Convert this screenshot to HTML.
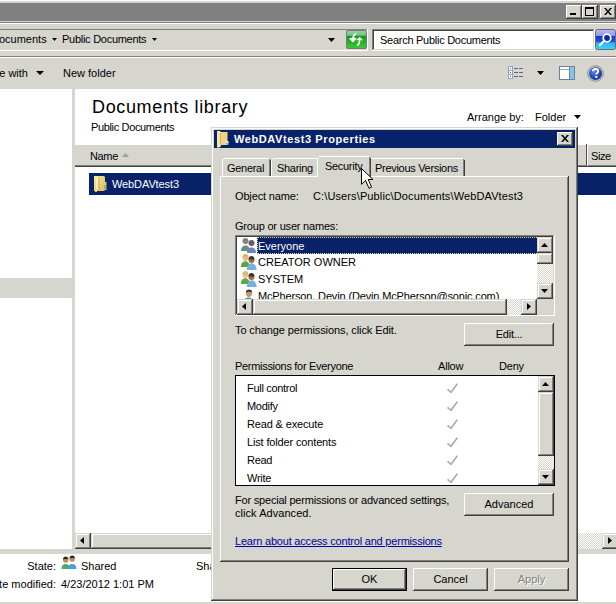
<!DOCTYPE html>
<html><head><meta charset="utf-8">
<style>
*{margin:0;padding:0;box-sizing:border-box}
html,body{width:616px;height:604px;overflow:hidden;background:#fff}
body{position:relative;font-family:"Liberation Sans",sans-serif;font-size:11px;color:#000}
.a{position:absolute}
.f{position:absolute;background:#d6d5ce}
.t{position:absolute;font:11px/13px "Liberation Sans",sans-serif;white-space:pre;color:#000}
.raised{box-shadow:inset -1px -1px #404040,inset 1px 1px #fff,inset -2px -2px #808080,inset 2px 2px #d6d5ce;background:#d6d5ce}
.sunken{box-shadow:inset -1px -1px #fff,inset 1px 1px #808080,inset -2px -2px #d6d5ce,inset 2px 2px #404040}
.dith{background-color:#fff;background-image:repeating-conic-gradient(#d6d5ce 0 25%,#fff 0 50%);background-size:2px 2px}
.sb{position:absolute;box-shadow:inset -1px -1px #404040,inset 1px 1px #d6d5ce,inset -2px -2px #808080,inset 2px 2px #fff;background:#d6d5ce}
.btn{position:absolute;box-shadow:inset -1px -1px #404040,inset 1px 1px #fff,inset -2px -2px #808080,inset 2px 2px #d6d5ce;background:#d6d5ce;font:11px/13px "Liberation Sans",sans-serif;text-align:center;white-space:pre}
</style></head><body>
<!-- ============ EXPLORER ============ -->
<div class="f" style="left:0;top:0;width:616px;height:89px"></div>
<div class="a" style="left:0;top:0;width:616px;height:1px;background:#fff"></div>
<div class="a" style="left:0;top:3px;width:616px;height:18px;background:#808080"></div>
<!-- caption buttons -->
<div class="btn" style="left:566px;top:5px;width:16px;height:14px"><div class="a" style="left:4px;top:8px;width:6px;height:2px;background:#000"></div></div>
<div class="btn" style="left:582px;top:5px;width:16px;height:14px"><div class="a" style="left:3px;top:2px;width:9px;height:9px;border:1px solid #000;border-top-width:2px"></div></div>
<div class="btn" style="left:600px;top:5px;width:16px;height:14px"><svg class="a" style="left:4px;top:3px" width="8" height="7" viewBox="0 0 8 7"><path d="M0 0h2l2 2.5L6 0h2L5 3.5 8 7H6L4 4.5 2 7H0l3-3.5z" fill="#000"/></svg></div>
<!-- separators -->
<div class="a" style="left:0;top:22px;width:616px;height:1px;background:#808080"></div>
<div class="a" style="left:0;top:23px;width:616px;height:1px;background:#fff"></div>
<!-- address bar -->
<div class="a" style="left:0;top:29px;width:367px;height:1px;background:#808080"></div>
<div class="a" style="left:367px;top:29px;width:1px;height:22px;background:#fff"></div>
<div class="a" style="left:0;top:50px;width:368px;height:1px;background:#fff"></div>
<div class="t" style="left:-9px;top:33px">Documents</div>
<svg class="a" style="left:52px;top:38px" width="5" height="3"><path d="M0 0h5L2.5 3z" fill="#000"/></svg>
<div class="t" style="left:62px;top:33px;letter-spacing:-0.27px">Public Documents</div>
<svg class="a" style="left:152px;top:38px" width="5" height="3"><path d="M0 0h5L2.5 3z" fill="#000"/></svg>
<svg class="a" style="left:328px;top:38px" width="7" height="4"><path d="M0 0h7L3.5 4z" fill="#000"/></svg>
<!-- refresh button -->
<svg class="a" style="left:346px;top:30px" width="21" height="19" viewBox="0 0 21 19">
<defs><linearGradient id="gg" x1="0" y1="0" x2="0" y2="1"><stop offset="0" stop-color="#9ad3a6"/><stop offset="0.27" stop-color="#6cc488"/><stop offset="0.31" stop-color="#0d9e0d"/><stop offset="1" stop-color="#3cc83c"/></linearGradient></defs>
<rect x="0.5" y="0.5" width="20" height="18" rx="1.5" fill="url(#gg)" stroke="#7a7a7a"/>
<path d="M10.3 3.8C8.2 4 7.3 5.5 7.3 8" stroke="#fff" stroke-width="1.7" fill="none"/>
<path d="M2.9 8.5L6.3 7.5H8.1L10.9 8.5L6.9 12.4Z" fill="#fff"/>
<path d="M13.6 10C13.6 13 12.8 14.6 11.2 15.5" stroke="#fff" stroke-width="1.7" fill="none"/>
<path d="M13.6 6.7L17.3 10.6L14.6 10.1H12.7L9.9 10.6Z" fill="#fff"/>
</svg>
<!-- search box -->
<div class="a sunken" style="left:372px;top:29px;width:223px;height:22px;background:#fff"></div>
<div class="t" style="left:380px;top:34px;letter-spacing:-0.27px">Search Public Documents</div>
<svg class="a" style="left:595px;top:29px" width="21" height="21" viewBox="0 0 21 21">
<defs><linearGradient id="bg" x1="0" y1="0" x2="0" y2="1"><stop offset="0" stop-color="#b8bdf5"/><stop offset="0.3" stop-color="#8f98ea"/><stop offset="0.34" stop-color="#1236c8"/><stop offset="0.62" stop-color="#1a56d8"/><stop offset="0.66" stop-color="#2fb4ee"/><stop offset="1" stop-color="#3cd4f6"/></linearGradient></defs>
<rect x="0.5" y="0.5" width="20" height="20" rx="2" fill="url(#bg)" stroke="#6c6c6c"/>
<circle cx="12" cy="9" r="3.8" fill="#0a2aa8" stroke="#fff" stroke-width="1.8"/>
<path d="M9.3 11.7L5 16" stroke="#fff" stroke-width="2.2" stroke-linecap="round"/>
</svg>
<!-- toolbar -->
<div class="a" style="left:0;top:56px;width:616px;height:1px;background:#808080"></div>
<div class="a" style="left:0;top:57px;width:616px;height:1px;background:#fff"></div>
<div class="t" style="left:-24px;top:67px">Share with</div>
<svg class="a" style="left:36px;top:71px" width="8" height="4"><path d="M0 0h8L4 4z" fill="#000"/></svg>
<div class="t" style="left:63px;top:67px">New folder</div>
<!-- views icon -->
<svg class="a" style="left:507px;top:65px" width="18" height="15" viewBox="0 0 18 15">
<rect x="1.5" y="1.5" width="4" height="4" fill="#fff" stroke="#8ea2c8"/><rect x="3" y="3" width="1" height="1" fill="#3a9a3a"/>
<rect x="1.5" y="5.5" width="4" height="4" fill="#fff" stroke="#8ea2c8"/><rect x="3" y="7" width="1" height="1" fill="#e02020"/>
<rect x="1.5" y="9.5" width="4" height="4" fill="#fff" stroke="#8ea2c8"/><rect x="3" y="11" width="1" height="1" fill="#2a7ae0"/>
<path d="M7 3.5h4M12 3.5h4M7 7.5h4M12 7.5h4M7 11.5h4M12 11.5h4" stroke="#5a6a84" stroke-width="1"/>
</svg>
<svg class="a" style="left:537px;top:71px" width="7" height="4"><path d="M0 0h7L3.5 4z" fill="#000"/></svg>
<!-- preview pane icon -->
<svg class="a" style="left:559px;top:66px" width="16" height="14" viewBox="0 0 16 14">
<rect x="0.5" y="0.5" width="15" height="13" fill="#fff" stroke="#6c7f9c"/>
<path d="M1 3.5h9" stroke="#9aaccc"/>
<rect x="10" y="1" width="5" height="12" fill="#6fd0ea"/>
<path d="M10.5 1v12" stroke="#6c7f9c"/>
<rect x="11.5" y="2" width="2.5" height="10" fill="#a8b8d0" opacity="0.6"/>
</svg>
<!-- help icon -->
<svg class="a" style="left:587px;top:65px" width="17" height="17" viewBox="0 0 17 17">
<defs><radialGradient id="hg" cx="0.4" cy="0.35" r="0.7"><stop offset="0" stop-color="#5a8ae8"/><stop offset="1" stop-color="#0a2a9a"/></radialGradient></defs>
<circle cx="8.5" cy="8.5" r="7.8" fill="#cfcfcf" stroke="#777" stroke-width="0.8"/>
<circle cx="8.5" cy="8.5" r="6.5" fill="url(#hg)"/>
<path d="M6 6.3c0-1.5 1.1-2.3 2.6-2.3 1.6 0 2.6 0.9 2.6 2.2 0 1.6-1.9 1.8-1.9 3.3" stroke="#fff" stroke-width="1.9" fill="none"/>
<rect x="8.3" y="11" width="2" height="2" fill="#fff"/>
</svg>
<!-- nav pane & content -->
<div class="f" style="left:72px;top:89px;width:3px;height:460px"></div>
<div class="f" style="left:0;top:278px;width:72px;height:20px"></div>
<div class="t" style="left:92px;top:96px;font-size:18px;line-height:22px;letter-spacing:0.65px">Documents library</div>
<div class="t" style="left:91px;top:121px;letter-spacing:-0.35px">Public Documents</div>
<div class="t" style="left:467px;top:111px">Arrange by:</div>
<div class="t" style="left:535px;top:111px">Folder</div>
<svg class="a" style="left:574px;top:115px" width="7" height="4"><path d="M0 0h7L3.5 4z" fill="#000"/></svg>
<!-- column header -->
<div class="f" style="left:75px;top:145px;width:541px;height:21px"></div>
<div class="a" style="left:75px;top:165px;width:541px;height:1px;background:#808080"></div><div class="a" style="left:75px;top:166px;width:541px;height:1px;background:#404040"></div>
<div class="a" style="left:586px;top:144px;width:1px;height:22px;background:#505050"></div>
<div class="a" style="left:587px;top:145px;width:1px;height:21px;background:#fff"></div>
<div class="t" style="left:90px;top:150px;letter-spacing:-0.35px">Name</div>
<svg class="a" style="left:122px;top:153px" width="7" height="4"><path d="M0 4h7L3.5 0z" fill="#a0a0a0"/></svg>
<div class="t" style="left:591px;top:150px;letter-spacing:-0.4px">Size</div>
<!-- selected row -->
<div class="a" style="left:89px;top:173px;width:527px;height:22px;background:#08226a"></div>
<svg class="a" style="left:93px;top:175px" width="15" height="17" viewBox="0 0 15 17">
<defs><linearGradient id="fy" x1="0" y1="0" x2="1" y2="1"><stop offset="0" stop-color="#f6e9a8"/><stop offset="1" stop-color="#d8b84c"/></linearGradient></defs>
<path d="M1 1h10l1 1v5h1.5v8H12l-1 1H4v1H2v-1H1z" fill="url(#fy)"/>
<path d="M4 2v13" stroke="#fff8d8" stroke-width="1.2"/>
<path d="M6 2v13" stroke="#c8a850" stroke-width="0.8"/>
<rect x="11.5" y="10" width="1" height="4" fill="#3aa0e0"/>
</svg>
<div class="t" style="left:112px;top:178px;color:#fff;letter-spacing:-0.1px">WebDAVtest3</div>
<!-- horizontal scrollbar -->
<div class="a dith" style="left:75px;top:533px;width:541px;height:16px"></div>
<div class="sb" style="left:75px;top:533px;width:16px;height:16px"><svg class="a" style="left:5px;top:4px" width="4" height="7"><path d="M4 0v7L0 3.5z" fill="#000"/></svg></div>
<div class="sb" style="left:91px;top:533px;width:400px;height:16px"></div>
<div class="sb" style="left:602px;top:533px;width:16px;height:16px"><svg class="a" style="left:6px;top:4px" width="4" height="7"><path d="M0 0v7L4 3.5z" fill="#000"/></svg></div>
<div class="f" style="left:0;top:549px;width:616px;height:5px"></div>
<!-- details pane -->
<div class="t" style="right:560px;top:560px">State:</div>
<svg class="a" style="left:61px;top:555px" width="16" height="14" viewBox="0 0 16 14">
<path d="M0.5 14c0-3.2 1.6-5 4.2-5s4.2 1.8 4.2 5z" fill="#4caa6a"/>
<circle cx="4.7" cy="5" r="2.7" fill="#c08a5a"/><path d="M2 4.6C2 2.6 3.2 1.6 4.7 1.6S7.4 2.6 7.4 4.6c-0.8-0.8-4.6-0.8-5.4 0z" fill="#2a2a2a"/>
<path d="M7 14c0-3.2 1.6-5 4.2-5s4.2 1.8 4.2 5z" fill="#4aa0d0"/>
<circle cx="11.2" cy="4" r="2.7" fill="#c08a5a"/><path d="M8.5 3.6C8.5 1.6 9.7 0.6 11.2 0.6s2.7 1 2.7 3c-0.8-0.8-4.6-0.8-5.4 0z" fill="#2a2a2a"/>
</svg>
<div class="t" style="left:81px;top:560px">Shared</div>
<div class="t" style="left:196px;top:560px">Shared by:</div>
<div class="t" style="right:560px;top:578px">Date modified:</div>
<div class="t" style="left:61px;top:578px">4/23/2012 1:01 PM</div>
<div class="f" style="left:0;top:602px;width:616px;height:2px"></div>
<!-- ============ DIALOG ============ -->
<div class="a" style="left:211px;top:127px;width:367px;height:474px;background:#d6d5ce;box-shadow:inset -1px -1px #404040,inset 1px 1px #d6d5ce,inset -2px -2px #808080,inset 2px 2px #fff"></div>
<div class="a" style="left:214px;top:130px;width:361px;height:18px;background:#08226a"></div>
<svg class="a" style="left:216px;top:130px" width="14" height="18" viewBox="0 0 14 18">
<path d="M3 2h8.5v13H3z" fill="#ead77e"/>
<path d="M1 1h3l1 1v14l-1.5 1.5H1z" fill="#f4e6a0"/>
<path d="M4.5 3v12" stroke="#d8a880" stroke-width="1"/>
<rect x="10.5" y="11" width="2" height="3.5" fill="#e8f0ff"/><rect x="10.5" y="13" width="1.5" height="1.5" fill="#5a9ae0"/>
</svg>
<div class="t" style="left:234px;top:133px;font-weight:bold;color:#fff;letter-spacing:0.6px">WebDAVtest3 Properties</div>
<div class="btn" style="left:557px;top:132px;width:16px;height:14px"><svg class="a" style="left:4px;top:3px" width="8" height="7" viewBox="0 0 8 7"><path d="M0 0h2l2 2.5L6 0h2L5 3.5 8 7H6L4 4.5 2 7H0l3-3.5z" fill="#000"/></svg></div>
<!-- tab panel -->
<div class="a" style="left:220px;top:176px;width:349px;height:386px;box-shadow:inset -1px -1px #404040,inset 1px 1px #fff,inset -2px -2px #808080"></div>
<!-- tabs -->
<div class="a" style="left:222px;top:160px;width:1px;height:16px;background:#fff"></div><div class="a" style="left:223px;top:159px;width:1px;height:1px;background:#fff"></div><div class="a" style="left:224px;top:158px;width:45px;height:1px;background:#fff"></div><div class="a" style="left:269px;top:159px;width:1px;height:17px;background:#808080"></div><div class="a" style="left:270px;top:160px;width:1px;height:16px;background:#404040"></div>
<div class="t" style="left:227px;top:162px;letter-spacing:-0.3px">General</div>
<div class="a" style="left:271px;top:160px;width:1px;height:16px;background:#fff"></div><div class="a" style="left:272px;top:159px;width:1px;height:1px;background:#fff"></div><div class="a" style="left:273px;top:158px;width:44px;height:1px;background:#fff"></div><div class="a" style="left:317px;top:159px;width:1px;height:17px;background:#808080"></div><div class="a" style="left:318px;top:160px;width:1px;height:16px;background:#404040"></div>
<div class="t" style="left:277px;top:162px;letter-spacing:-0.3px">Sharing</div>
<div class="a" style="left:369px;top:160px;width:1px;height:16px;background:#fff"></div><div class="a" style="left:370px;top:159px;width:1px;height:1px;background:#fff"></div><div class="a" style="left:371px;top:158px;width:92px;height:1px;background:#fff"></div><div class="a" style="left:463px;top:159px;width:1px;height:17px;background:#808080"></div><div class="a" style="left:464px;top:160px;width:1px;height:16px;background:#404040"></div>
<div class="t" style="left:375px;top:162px;letter-spacing:-0.3px">Previous Versions</div>
<div class="a" style="left:317px;top:156px;width:54px;height:21px;background:#d6d5ce"></div><div class="a" style="left:317px;top:158px;width:1px;height:19px;background:#fff"></div><div class="a" style="left:318px;top:157px;width:1px;height:1px;background:#fff"></div><div class="a" style="left:319px;top:156px;width:50px;height:1px;background:#fff"></div><div class="a" style="left:369px;top:157px;width:1px;height:20px;background:#808080"></div><div class="a" style="left:370px;top:158px;width:1px;height:19px;background:#404040"></div>
<div class="t" style="left:325px;top:160px;letter-spacing:-0.3px">Security</div>
<!-- object name -->
<div class="t" style="left:235px;top:190px;letter-spacing:-0.15px">Object name:</div>
<div class="t" style="left:313px;top:190px;letter-spacing:0.12px">C:\Users\Public\Documents\WebDAVtest3</div>
<div class="t" style="left:235px;top:220px;letter-spacing:-0.2px">Group or user names:</div>
<!-- listbox 1 -->
<div class="a sunken" style="left:235px;top:235px;width:320px;height:81px;background:#fff;overflow:hidden">
</div>
<div class="a" style="left:237px;top:237px;width:300px;height:62px;overflow:hidden">
  <div class="a" style="left:20px;top:0;width:290px;height:17px;background:#08226a;outline:1px dotted #e8d48c;outline-offset:-1px"></div>
  <div class="t" style="left:21px;top:3px;color:#fff">Everyone</div>
  <div class="t" style="left:21px;top:19px">CREATOR OWNER</div>
  <div class="t" style="left:21px;top:36px">SYSTEM</div>
  <div class="t" style="left:21px;top:53px;letter-spacing:-0.15px">McPherson, Devin (Devin.McPherson@sonic.com)</div>
  <svg class="a" style="left:3px;top:0" width="17" height="16" viewBox="0 0 17 16" opacity="0.75">
    <circle cx="5.5" cy="4" r="3" fill="#5a5a5a"/><path d="M1 14c0-3.5 2-5.5 4.5-5.5S10 10.5 10 14z" fill="#2f6a50"/>
    <circle cx="11.5" cy="6" r="3" fill="#2a2a3a"/><path d="M7 16c0-3.5 2-5.5 4.5-5.5S16 12.5 16 16z" fill="#3a5ab0"/>
  </svg>
  <svg class="a" style="left:3px;top:17px" width="17" height="16" viewBox="0 0 17 16">
    <circle cx="5.5" cy="4" r="3" fill="#e8c090"/><path d="M2.5 3.5c0-2.5 1.5-3.5 3-3.5s3 1 3 3.5z" fill="#d8b860"/><path d="M0.8 13c0-3.5 1.9-5.8 4.5-5.8S9.8 9.5 9.8 13z" fill="#5aa848"/>
    <circle cx="11.5" cy="6" r="3" fill="#a86a40"/><path d="M8.5 5.5c0-2.5 1.5-3.5 3-3.5s3 1 3 3.5z" fill="#333"/><path d="M6.8 16c0-4 2.2-6.8 4.9-6.8s4.9 2.8 4.9 6.8z" fill="#7ab0e0"/>
  </svg>
  <svg class="a" style="left:3px;top:34px" width="17" height="16" viewBox="0 0 17 16">
    <circle cx="5.5" cy="4" r="3" fill="#e8c090"/><path d="M2.5 3.5c0-2.5 1.5-3.5 3-3.5s3 1 3 3.5z" fill="#d8b860"/><path d="M0.8 13c0-3.5 1.9-5.8 4.5-5.8S9.8 9.5 9.8 13z" fill="#5aa848"/>
    <circle cx="11.5" cy="6" r="3" fill="#a86a40"/><path d="M8.5 5.5c0-2.5 1.5-3.5 3-3.5s3 1 3 3.5z" fill="#333"/><path d="M6.8 16c0-4 2.2-6.8 4.9-6.8s4.9 2.8 4.9 6.8z" fill="#7ab0e0"/>
  </svg>
  <svg class="a" style="left:3px;top:51px" width="17" height="16" viewBox="0 0 17 16">
    <path d="M3.5 15c0-3.5 2.3-5.5 5-5.5s5 2 5 5.5z" fill="#3aa070"/>
    <ellipse cx="9" cy="5.6" rx="3" ry="3.4" fill="#c8966a"/><path d="M5.8 5C5.8 2.4 7.2 1.4 9 1.4s3.3 1 3.3 3.4C11.5 4 10 3.8 9 3.8S6.6 4.2 5.8 5z" fill="#333"/>
  </svg>
</div>
<!-- listbox1 v scrollbar -->
<div class="a dith" style="left:537px;top:237px;width:16px;height:62px"></div>
<div class="sb" style="left:537px;top:237px;width:16px;height:16px"><svg class="a" style="left:4px;top:6px" width="7" height="4"><path d="M0 4h7L3.5 0z" fill="#000"/></svg></div>
<div class="sb" style="left:537px;top:253px;width:16px;height:11px"></div>
<div class="sb" style="left:537px;top:283px;width:16px;height:16px"><svg class="a" style="left:4px;top:6px" width="7" height="4"><path d="M0 0h7L3.5 4z" fill="#000"/></svg></div>
<!-- listbox1 h scrollbar -->
<div class="a dith" style="left:237px;top:299px;width:300px;height:16px"></div>
<div class="sb" style="left:237px;top:299px;width:16px;height:16px"><svg class="a" style="left:5px;top:4px" width="4" height="7"><path d="M4 0v7L0 3.5z" fill="#000"/></svg></div>
<div class="sb" style="left:253px;top:299px;width:254px;height:16px"></div>
<div class="sb" style="left:521px;top:299px;width:16px;height:16px"><svg class="a" style="left:6px;top:4px" width="4" height="7"><path d="M0 0v7L4 3.5z" fill="#000"/></svg></div>
<div class="f" style="left:537px;top:299px;width:16px;height:16px"></div>
<div class="t" style="left:235px;top:324px;letter-spacing:-0.1px">To change permissions, click Edit.</div>
<div class="btn" style="left:464px;top:323px;width:90px;height:23px;padding-top:5px;letter-spacing:-0.2px">Edit...</div>
<div class="t" style="left:235px;top:360px;letter-spacing:-0.3px">Permissions for Everyone</div>
<div class="t" style="left:438px;top:360px;letter-spacing:-0.2px">Allow</div>
<div class="t" style="left:499px;top:360px;letter-spacing:-0.2px">Deny</div>
<!-- listbox 2 -->
<div class="a" style="left:235px;top:375px;width:320px;height:111px;background:#fff;border:1px solid #000"></div>
<div class="t" style="left:247px;top:382px;letter-spacing:-0.3px">Full control</div>
<div class="t" style="left:247px;top:400px;letter-spacing:-0.3px">Modify</div>
<div class="t" style="left:247px;top:418px;letter-spacing:-0.15px">Read &amp; execute</div>
<div class="t" style="left:247px;top:436px;letter-spacing:-0.15px">List folder contents</div>
<div class="t" style="left:247px;top:454px;letter-spacing:-0.3px">Read</div>
<div class="t" style="left:247px;top:472px;letter-spacing:-0.3px">Write</div>
<svg class="a" style="left:446px;top:382px" width="14" height="104" viewBox="0 0 14 104">
<g fill="none" stroke="#acacac" stroke-width="1.7"><path d="M1.5 7.3L5 10.3L11.3 1.7"/><path d="M1.5 25.3L5 28.3L11.3 19.7"/><path d="M1.5 43.3L5 46.3L11.3 37.7"/><path d="M1.5 61.3L5 64.3L11.3 55.7"/><path d="M1.5 79.3L5 82.3L11.3 73.7"/><path d="M1.5 97.3L5 100.3L11.3 91.7"/></g></svg>
<!-- listbox2 v scrollbar -->
<div class="a dith" style="left:538px;top:376px;width:16px;height:109px"></div>
<div class="sb" style="left:538px;top:376px;width:16px;height:16px"><svg class="a" style="left:4px;top:6px" width="7" height="4"><path d="M0 4h7L3.5 0z" fill="#000"/></svg></div>
<div class="sb" style="left:538px;top:392px;width:16px;height:64px"></div>
<div class="sb" style="left:538px;top:469px;width:16px;height:16px"><svg class="a" style="left:4px;top:6px" width="7" height="4"><path d="M0 0h7L3.5 4z" fill="#000"/></svg></div>
<div class="t" style="left:235px;top:494px;letter-spacing:-0.2px">For special permissions or advanced settings,</div>
<div class="t" style="left:235px;top:507px;letter-spacing:0.05px">click Advanced.</div>
<div class="btn" style="left:464px;top:493px;width:90px;height:23px;padding-top:5px">Advanced</div>
<div class="t" style="left:235px;top:535px;color:#00009c;text-decoration:underline;letter-spacing:-0.2px">Learn about access control and permissions</div>
<!-- buttons -->
<div class="btn" style="left:332px;top:568px;width:75px;height:23px;padding-top:5px;box-shadow:inset -1px -1px #000,inset 1px 1px #000,inset -2px -2px #404040,inset 2px 2px #fff,inset -3px -3px #808080">OK</div>
<div class="btn" style="left:413px;top:568px;width:75px;height:23px;padding-top:5px">Cancel</div>
<div class="btn" style="left:494px;top:568px;width:75px;height:23px;padding-top:5px;color:#808080;text-shadow:1px 1px #fff">Apply</div>
<!-- cursor -->
<svg class="a" style="left:360px;top:167px" width="16" height="24" viewBox="0 0 16 24">
<path d="M1.5 1.5V17.4L5.5 13.3L9 21.3L11.6 20.1L8.2 12.5H13Z" fill="#fff" stroke="#000" stroke-width="1" stroke-linejoin="miter"/>
</svg>
</body></html>
